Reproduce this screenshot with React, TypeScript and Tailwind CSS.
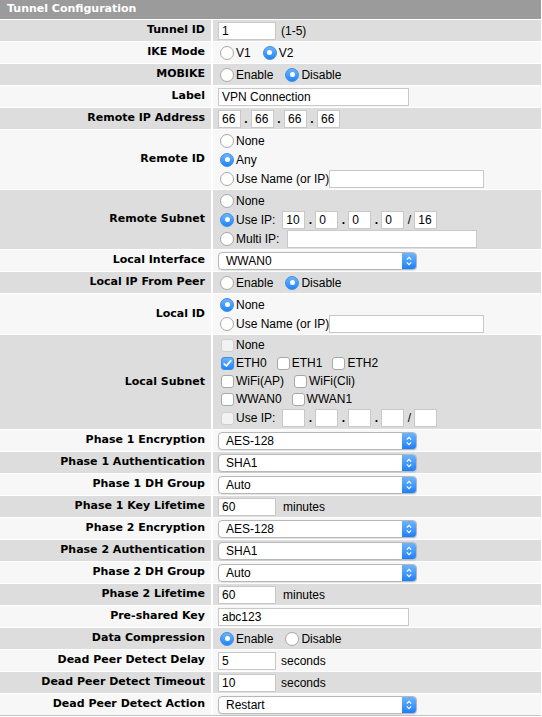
import type { ReactNode } from "react"
import { clsx } from "clsx"

/** Radio button drawn the way Safari paints it. */
function Radio({ label, checked }: { label: string; checked?: boolean }) {
  return (
    <span className="inline-flex items-center mr-[10px]">
      <span
        className={clsx(
          "ml-[2px] mr-[2px] w-[14px] h-[14px] rounded-full flex items-center justify-center shrink-0",
          checked
            ? "bg-linear-to-b from-[#6cb4fb] to-[#1c84fb] border border-[#3a8ee6]"
            : "bg-white border border-[#a8a8a8]"
        )}
      >
        {checked && <span className="w-[5px] h-[5px] rounded-full bg-white" />}
      </span>
      <span>{label}</span>
    </span>
  )
}

/** Checkbox, optionally checked or greyed out. */
function Check({
  label,
  checked,
  disabled,
}: {
  label: string
  checked?: boolean
  disabled?: boolean
}) {
  return (
    <span className="inline-flex items-center mr-[7px]">
      <span
        className={clsx(
          "ml-[3px] mr-[2px] w-[13px] h-[13px] rounded-[3px] flex items-center justify-center shrink-0",
          checked && "bg-linear-to-b from-[#6cb4fb] to-[#1c84fb] border border-[#3a8ee6]",
          !checked && !disabled && "bg-white border border-[#a8a8a8]",
          disabled && "bg-[#f2f2f2] border border-[#cfcfcf]"
        )}
      >
        {checked && (
          <svg width="11" height="11" viewBox="0 0 11 11">
            <path
              d="M2.2 5.8 L4.4 8 L8.8 2.6"
              fill="none"
              stroke="white"
              strokeWidth="1.7"
              strokeLinecap="round"
              strokeLinejoin="round"
            />
          </svg>
        )}
      </span>
      <span>{label}</span>
    </span>
  )
}

/** Plain text field. */
function Field({ value = "", w, className }: { value?: string; w: string; className?: string }) {
  return (
    <span
      className={clsx(
        "inline-block h-[18px] bg-white border border-[#c8c8c8] pl-[3px] leading-[16px] overflow-hidden whitespace-nowrap shrink-0",
        w,
        className
      )}
    >
      {value}
    </span>
  )
}

/** Dotted quad of small boxes, with an optional mask box. */
function IpBoxes({ parts, mask }: { parts: string[]; mask?: string }) {
  return (
    <span className="inline-flex items-center">
      {parts.map((p, i) => (
        <span key={i} className="inline-flex items-center">
          {i > 0 && <span className="w-[10px] text-center font-bold">.</span>}
          <Field value={p} w="w-[23px]" />
        </span>
      ))}
      {mask !== undefined && (
        <>
          <span className="w-[10px] text-center">/</span>
          <Field value={mask} w="w-[23px]" />
        </>
      )}
    </span>
  )
}

/** Drop-down in the macOS look, with the blue stepper on the right. */
function Select({ value }: { value: string }) {
  return (
    <div className="w-[199px] h-[18px] flex rounded-[4px] border border-[#b8b8b8] bg-white overflow-hidden shadow-[0_1px_1px_rgba(0,0,0,0.08)]">
      <span className="flex-1 pl-[7px] leading-[16px]">{value}</span>
      <span className="w-[14px] bg-linear-to-b from-[#6cb4fb] to-[#1a7ff8] flex items-center justify-center">
        <svg width="8" height="12" viewBox="0 0 8 12">
          <path
            d="M1.8 4.6 L4 2.4 L6.2 4.6 M1.8 7.4 L4 9.6 L6.2 7.4"
            fill="none"
            stroke="white"
            strokeWidth="1.2"
          />
        </svg>
      </span>
    </div>
  )
}

function Line({ children, h = "h-[19px]" }: { children: ReactNode; h?: string }) {
  return <div className={clsx("flex items-center", h)}>{children}</div>
}

function Row({
  label,
  children,
  index,
  multi,
}: {
  label: string
  children: ReactNode
  index: number
  multi?: boolean
}) {
  const bg = index % 2 === 0 ? "bg-[#dddddd]" : "bg-[#f7f7f7]"
  return (
    <div className={clsx("flex gap-[2px]", multi ? "" : "h-[21px]")}>
      <div
        className={clsx(
          "w-[211px] shrink-0 flex items-center justify-end pr-[6px] font-bold text-[11px] text-black font-['DejaVu_Sans',Verdana,sans-serif]",
          bg
        )}
      >
        {label}
      </div>
      <div
        className={clsx(
          "flex-1 pl-[5px] text-[12px] text-black font-['Liberation_Sans',Arial,sans-serif]",
          bg,
          multi ? "flex flex-col justify-center py-[1px]" : "flex items-center"
        )}
      >
        {children}
      </div>
    </div>
  )
}

export default function App() {
  let i = 0
  return (
    <div className="w-[541px] bg-white flex flex-col gap-px border-b border-[#c4c4c4]">
      <div className="h-[19px] bg-[#9b9b9b] text-white font-bold text-[11px] pl-[7px] flex items-center font-['DejaVu_Sans',Verdana,sans-serif]">
        Tunnel Configuration
      </div>

      <Row label="Tunnel ID" index={i++}>
        <Field value="1" w="w-[58px]" />
        <span className="ml-[5px]">(1-5)</span>
      </Row>
      <Row label="IKE Mode" index={i++}>
        <Radio label="V1" />
        <Radio label="V2" checked />
      </Row>
      <Row label="MOBIKE" index={i++}>
        <Radio label="Enable" />
        <Radio label="Disable" checked />
      </Row>
      <Row label="Label" index={i++}>
        <Field value="VPN Connection" w="w-[191px]" />
      </Row>
      <Row label="Remote IP Address" index={i++}>
        <IpBoxes parts={["66", "66", "66", "66"]} />
      </Row>
      <Row label="Remote ID" index={i++} multi>
        <Line>
          <Radio label="None" />
        </Line>
        <Line>
          <Radio label="Any" checked />
        </Line>
        <Line>
          <Radio label="Use Name (or IP)" />
          <Field w="w-[155px]" className="-ml-[10px]" />
        </Line>
      </Row>
      <Row label="Remote Subnet" index={i++} multi>
        <Line>
          <Radio label="None" />
        </Line>
        <Line>
          <Radio label="Use IP:" checked />
          <span className="-ml-[3px]">
            <IpBoxes parts={["10", "0", "0", "0"]} mask="16" />
          </span>
        </Line>
        <Line>
          <Radio label="Multi IP:" />
          <Field w="w-[190px]" className="-ml-[2px]" />
        </Line>
      </Row>
      <Row label="Local Interface" index={i++}>
        <Select value="WWAN0" />
      </Row>
      <Row label="Local IP From Peer" index={i++}>
        <Radio label="Enable" />
        <Radio label="Disable" checked />
      </Row>
      <Row label="Local ID" index={i++} multi>
        <Line>
          <Radio label="None" checked />
        </Line>
        <Line>
          <Radio label="Use Name (or IP)" />
          <Field w="w-[155px]" className="-ml-[10px]" />
        </Line>
      </Row>
      <Row label="Local Subnet" index={i++} multi>
        <Line h="h-[18px]">
          <Check label="None" disabled />
        </Line>
        <Line h="h-[18px]">
          <Check label="ETH0" checked />
          <Check label="ETH1" />
          <Check label="ETH2" />
        </Line>
        <Line h="h-[18px]">
          <Check label="WiFi(AP)" />
          <Check label="WiFi(Cli)" />
        </Line>
        <Line h="h-[18px]">
          <Check label="WWAN0" />
          <Check label="WWAN1" />
        </Line>
        <Line h="h-[20px]">
          <Check label="Use IP:" disabled />
          <IpBoxes parts={["", "", "", ""]} mask="" />
        </Line>
      </Row>
      <Row label="Phase 1 Encryption" index={i++}>
        <Select value="AES-128" />
      </Row>
      <Row label="Phase 1 Authentication" index={i++}>
        <Select value="SHA1" />
      </Row>
      <Row label="Phase 1 DH Group" index={i++}>
        <Select value="Auto" />
      </Row>
      <Row label="Phase 1 Key Lifetime" index={i++}>
        <Field value="60" w="w-[58px]" />
        <span className="ml-[7px]">minutes</span>
      </Row>
      <Row label="Phase 2 Encryption" index={i++}>
        <Select value="AES-128" />
      </Row>
      <Row label="Phase 2 Authentication" index={i++}>
        <Select value="SHA1" />
      </Row>
      <Row label="Phase 2 DH Group" index={i++}>
        <Select value="Auto" />
      </Row>
      <Row label="Phase 2 Lifetime" index={i++}>
        <Field value="60" w="w-[58px]" />
        <span className="ml-[7px]">minutes</span>
      </Row>
      <Row label="Pre-shared Key" index={i++}>
        <Field value="abc123" w="w-[191px]" />
      </Row>
      <Row label="Data Compression" index={i++}>
        <Radio label="Enable" checked />
        <Radio label="Disable" />
      </Row>
      <Row label="Dead Peer Detect Delay" index={i++}>
        <Field value="5" w="w-[58px]" />
        <span className="ml-[5px]">seconds</span>
      </Row>
      <Row label="Dead Peer Detect Timeout" index={i++}>
        <Field value="10" w="w-[58px]" />
        <span className="ml-[5px]">seconds</span>
      </Row>
      <Row label="Dead Peer Detect Action" index={i++}>
        <Select value="Restart" />
      </Row>
    </div>
  )
}
